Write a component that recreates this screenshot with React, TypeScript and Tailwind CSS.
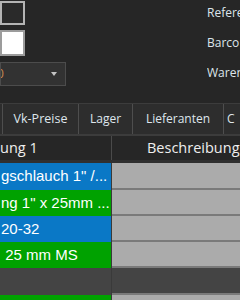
export default function App() {
  const rows = [
    { text: "gschlauch 1\" /...", bg: "bg-[#0a78c6]", right: "bg-[#ababab]", h: "h-[27px]" },
    { text: "ng 1\" x 25mm ...", bg: "bg-[#00a200]", right: "bg-[#ababab]", h: "h-[26px]" },
    { text: "20-32", bg: "bg-[#0a78c6]", right: "bg-[#ababab]", h: "h-[26px]" },
    { text: " 25 mm MS", bg: "bg-[#00a200]", right: "bg-[#ababab]", h: "h-[26px]" },
    { text: "", bg: "bg-[#444444]", right: "bg-[#444444]", h: "h-[27px]" },
    { text: "", bg: "bg-[#00a200]", right: "bg-[#ababab]", h: "h-[27px]" },
  ];

  return (
    <div className="w-[240px] h-[300px] overflow-hidden bg-[#262626] font-['Open_Sans',sans-serif]">
      {/* Kopfbereich */}
      <div className="h-[103px] flex justify-between">
        <div className="flex flex-col pt-[1px]">
          <div className="w-[25px] h-[24px] border-2 border-[#b4b4b4] bg-[#2a2a2a]" />
          <div className="mt-[5px] w-[25px] h-[26px] border-2 border-[#9c9c9c] bg-white" />
          <div className="mt-[6px] w-[66px] h-[24px] border border-[#4c4c4c] bg-[#323232] flex items-center overflow-hidden">
            <span className="ml-[-4px] text-[12px] leading-none text-[#c98a52]">0</span>
            <span className="ml-auto mr-[8px] w-0 h-0 border-l-[3px] border-r-[3px] border-t-[4px] border-l-transparent border-r-transparent border-t-[#c4c4c4]" />
          </div>
        </div>
        <div className="w-[33px] flex flex-col pt-[5px] gap-[14px] text-[12px] leading-[16px] text-[#dde5eb] whitespace-nowrap overflow-hidden">
          <span>Refere</span>
          <span>Barco</span>
          <span>Waren</span>
        </div>
      </div>

      {/* Reiter */}
      <div className="h-[33px] flex border-t border-b-2 border-[#3c3c3c] text-[12px] text-[#dfe6ec] whitespace-nowrap">
        <div className="w-[3px] border-r border-[#4e4e4e] bg-[#2d2d2d]" />
        <div className="w-[76px] border-r border-[#4e4e4e] bg-[#2d2d2d] flex items-center justify-center text-[12.5px]">Vk-Preise</div>
        <div className="w-[54px] border-r border-[#4e4e4e] bg-[#2d2d2d] flex items-center justify-center">Lager</div>
        <div className="w-[91px] border-r border-[#4e4e4e] bg-[#2d2d2d] flex items-center justify-center">Lieferanten</div>
        <div className="flex-1 bg-[#2d2d2d] flex items-center pl-[3px] overflow-hidden">C</div>
      </div>

      {/* Tabellenkopf */}
      <div className="h-[27px] flex border-b-[3px] border-[#303030] text-[14.5px] text-[#eeeeee] whitespace-nowrap">
        <div className="w-[112px] border-r border-[#4a4a4a] flex items-center overflow-hidden">ung 1</div>
        <div className="flex-1 flex items-center pl-[35px] overflow-hidden">Beschreibung</div>
      </div>

      {/* Zeilen */}
      {rows.map((r, i) => (
        <div key={i} className={`${r.h} flex`}>
          <div className={`w-[112px] ${r.bg} border-r border-[#3a3a3a] flex items-center pl-[1px] overflow-hidden whitespace-pre text-[15px] text-white font-['Liberation_Sans',sans-serif]`}>
            {r.text}
          </div>
          <div className={`flex-1 ${r.right} border-b-2 border-[#7a7a7a]`} />
        </div>
      ))}
    </div>
  );
}
